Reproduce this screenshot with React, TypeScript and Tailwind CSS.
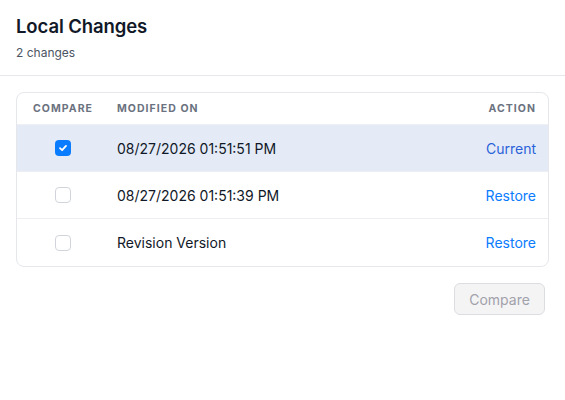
import React from "react";

const rows = [
  { label: "08/27/2026 01:51:51 PM", checked: true, action: "Current" },
  { label: "08/27/2026 01:51:39 PM", checked: false, action: "Restore" },
  { label: "Revision Version", checked: false, action: "Restore" },
];

function Checkbox({ checked }: { checked: boolean }) {
  if (checked) {
    return (
      <span className="flex h-4 w-4 items-center justify-center rounded-[4px] bg-[#0a7cff]">
        <svg width="10" height="10" viewBox="0 0 10 10" fill="none">
          <path d="M2 5.2 L4.1 7.2 L8 2.9" stroke="white" strokeWidth="1.8" strokeLinecap="round" strokeLinejoin="round" />
        </svg>
      </span>
    );
  }
  return <span className="block h-4 w-4 rounded-[4px] border border-[#d1d5db] bg-white" />;
}

export default function App() {
  return (
    <div className="h-[400px] w-[565px] bg-white" style={{ fontFamily: "Inter, 'Noto Sans', sans-serif" }}>
      <div className="border-b border-[#e5e7eb] px-4 pb-[14px] pt-[13px]">
        <h1 className="text-[18.5px] font-semibold leading-[26px] tracking-[-0.1px] text-[#111827]">Local Changes</h1>
        <p className="mt-[6px] text-[12px] leading-[16px] text-[#4b5563]">2 changes</p>
      </div>
      <div className="px-4 pt-4">
        <div className="overflow-hidden rounded-lg border border-[#e5e7eb]">
          <div className="flex h-[32px] items-center border-b border-[#eef0f3] text-[10.5px] font-bold uppercase tracking-[0.1em] text-[#6b7280]">
            <div className="flex w-[92px] justify-center">Compare</div>
            <div className="flex-1 pl-2">Modified On</div>
            <div className="pr-3">Action</div>
          </div>
          {rows.map((r, i) => (
            <div
              key={i}
              className={`flex h-[47px] items-center text-[14px] text-[#111827] ${i < rows.length - 1 ? "border-b border-[#eceef1]" : ""} ${r.checked ? "bg-[#e4ebf7]" : ""}`}
            >
              <div className="flex w-[92px] justify-center">
                <Checkbox checked={r.checked} />
              </div>
              <div className="flex-1 pl-2">{r.label}</div>
              <div className={`pr-3 ${r.action === "Current" ? "text-[#2b62d9]" : "text-[#0a7cff]"}`}>{r.action}</div>
            </div>
          ))}
        </div>
        <div className="mt-4 flex justify-end pr-1">
          <button
            disabled
            className="h-[32px] w-[91px] rounded-md border border-[#dcdde0] bg-[#f4f4f5] text-[14px] text-[#a1a1aa]"
          >
            Compare
          </button>
        </div>
      </div>
    </div>
  );
}
